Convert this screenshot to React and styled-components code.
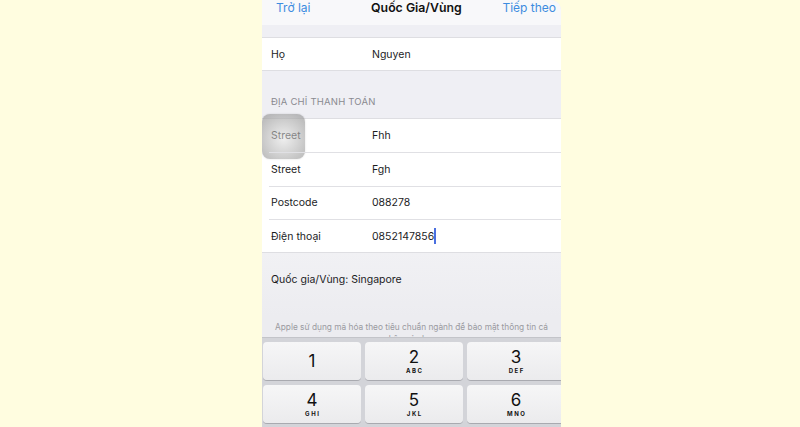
import React from 'react';
import styled, { createGlobalStyle } from 'styled-components';

/********************************************** Styles ********************************************/
const GlobalStyle = createGlobalStyle`
  html, body {
    margin: 0;
    padding: 0;
    background: #fffde0;
  }
  * {
    box-sizing: border-box;
  }
`;

const Page = styled.div`
  display: flex;
  justify-content: center;
  width: 800px;
  height: 427px;
  overflow: hidden;
  background: #fffde0;
  font-family: Inter, "Noto Sans", "Liberation Sans", sans-serif;
`;

const Phone = styled.div`
  display: flex;
  flex-direction: column;
  width: 299px;
  height: 427px;
  margin-left: 23px;
  overflow: hidden;
  background: #efeff4;
  border-top-right-radius: 10px;
`;

const NavBar = styled.div`
  display: flex;
  align-items: flex-start;
  justify-content: space-between;
  height: 25px;
  padding: 1px 5px 0 14px;
  background: #f8f8fa;
`;

const NavLink = styled.span`
  color: #3d8ce0;
  font-size: 12px;
  line-height: 14px;
`;

const NavTitle = styled.span`
  color: #111;
  font-size: 12.3px;
  font-weight: 600;
  line-height: 14px;
  margin-left: 20px;
`;

const Gap = styled.div`
  height: ${p => p.h}px;
  flex-shrink: 0;
`;

const Group = styled.div`
  background: #fff;
  border-top: 1px solid #dedee2;
  border-bottom: 1px solid #dedee2;
`;

const Row = styled.div`
  position: relative;
  display: flex;
  align-items: center;
  height: ${p => p.h || 33.3}px;
  margin-left: 7px;
  padding-left: 2px;
  font-size: 10.5px;
  color: #1c1c1e;
  & + & {
    border-top: 1px solid #e0e0e4;
  }
`;

const Label = styled.span`
  width: 101px;
  flex-shrink: 0;
`;

const Value = styled.span`
  display: flex;
  align-items: center;
`;

const Caret = styled.span`
  display: inline-block;
  width: 2px;
  height: 16px;
  background: #4a6fe0;
`;

const Touch = styled.div`
  position: absolute;
  left: -7px;
  top: -5px;
  width: 43px;
  height: 45px;
  border-radius: 8px;
  background: radial-gradient(circle at 50% 55%, rgba(225, 225, 225, 0.55), rgba(150, 150, 150, 0.72));
  box-shadow: 0 0 2px rgba(0, 0, 0, 0.15);
`;

const SectionHeader = styled.div`
  height: 47px;
  padding: 25px 0 0 9px;
  font-size: 9.5px;
  letter-spacing: 0.2px;
  color: #8a8a90;
`;

const Country = styled.div`
  padding: 20px 0 0 9px;
  height: 64px;
  font-size: 10.5px;
  color: #1c1c1e;
  background: linear-gradient(#f1f1f4, #ececf0);
`;

const Notice = styled.div`
  height: 20px;
  padding-top: 4px;
  text-align: center;
  font-size: 8.3px;
  line-height: 12px;
  color: #9a9aa0;
  overflow: hidden;
  white-space: nowrap;
  background: #ececf0;
`;

const Keyboard = styled.div`
  display: grid;
  grid-template-columns: repeat(3, 98px);
  grid-auto-rows: 38px;
  gap: 5px 4px;
  flex: 1;
  padding: 4px 0 0 1px;
  background: #d3d4d9;
  border-top: 1px solid #c3c4c9;
`;

const Key = styled.div`
  display: flex;
  flex-direction: column;
  align-items: center;
  justify-content: center;
  border-radius: 4px;
  background: linear-gradient(#f6f6f7, #ebebed);
  box-shadow: 0 1px 0 #a9aab0;
  color: #111;
`;

const Digit = styled.span`
  font-size: 17px;
  line-height: 18px;
  font-weight: 400;
`;

const Letters = styled.span`
  font-size: 6px;
  font-weight: 700;
  letter-spacing: 1.6px;
  margin-left: 1.6px;
  line-height: 8px;
  margin-top: 1px;
`;

/********************************************* Component ******************************************/
const keys = [
  ['1', ''],
  ['2', 'ABC'],
  ['3', 'DEF'],
  ['4', 'GHI'],
  ['5', 'JKL'],
  ['6', 'MNO'],
];

const billing = [
  ['Street', 'Fhh'],
  ['Street', 'Fgh'],
  ['Postcode', '088278'],
  ['Điện thoại', '0852147856'],
];

const App = () => {
  return (
    <Page>
      <GlobalStyle />
      <Phone>
        <NavBar>
          <NavLink>Trở lại</NavLink>
          <NavTitle>Quốc Gia/Vùng</NavTitle>
          <NavLink>Tiếp theo</NavLink>
        </NavBar>
        <Gap h={12} />
        <Group>
          <Row h={32}>
            <Label>Họ</Label>
            <Value>Nguyen</Value>
          </Row>
        </Group>
        <SectionHeader>ĐỊA CHỈ THANH TOÁN</SectionHeader>
        <Group>
          {billing.map(([label, value], i) => (
            <Row key={i}>
              {i === 0 && <Touch />}
              <Label>{label}</Label>
              <Value>
                {value}
                {i === billing.length - 1 && <Caret />}
              </Value>
            </Row>
          ))}
        </Group>
        <Country>Quốc gia/Vùng: Singapore</Country>
        <Notice>
          Apple sử dụng mã hóa theo tiêu chuẩn ngành để bảo mật thông tin cá
          <br />
          nhân của bạn.
        </Notice>
        <Keyboard>
          {keys.map(([d, l]) => (
            <Key key={d}>
              <Digit>{d}</Digit>
              {l && <Letters>{l}</Letters>}
            </Key>
          ))}
        </Keyboard>
      </Phone>
    </Page>
  );
};

export default App;
